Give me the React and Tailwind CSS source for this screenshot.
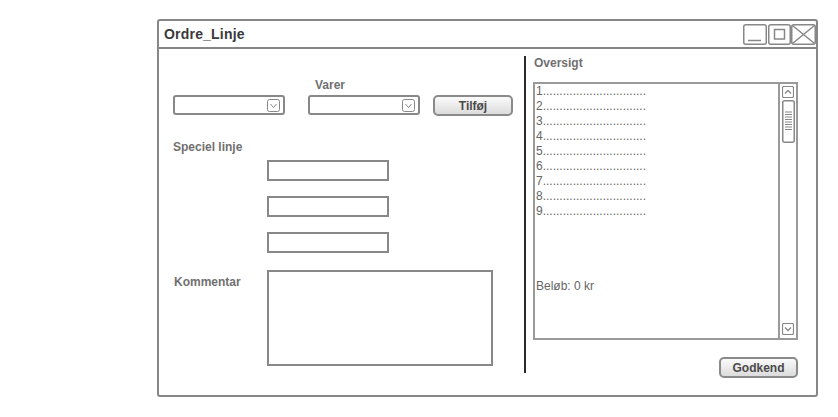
import React from 'react';

const WinButtons = () => (
  <svg width="73" height="21" viewBox="0 0 73 21" fill="none" stroke="#888" strokeWidth="1.5">
    <rect x="0.75" y="0.75" width="22.5" height="19.5" rx="2" />
    <path d="M5 16.5 H18" />
    <rect x="25.75" y="0.75" width="21.5" height="19.5" rx="2" />
    <rect x="31.5" y="5.5" width="10" height="9.5" />
    <rect x="48.75" y="0.75" width="23.5" height="19.5" rx="2" />
    <path d="M49.5 1.5 L71.5 19.5 M71.5 1.5 L49.5 19.5" />
  </svg>
);

const DropBox = () => (
  <svg width="13" height="13" viewBox="0 0 13 13" fill="none" stroke="#888">
    <rect x="0.5" y="0.5" width="12" height="12" rx="2" />
    <path d="M3.5 5 L6.5 8.5 L9.5 5" />
  </svg>
);

const Select = () => (
  <div className="w-[112px] h-[20px] border-2 border-[#888] rounded-[3px] flex items-center justify-end pr-[3px]">
    <DropBox />
  </div>
);

const ArrowBox = ({ up }) => (
  <svg width="12" height="12" viewBox="0 0 12 12" fill="none" stroke="#888">
    <rect x="0.5" y="0.5" width="11" height="11" rx="1.5" strokeWidth="1.2" />
    <path d={up ? 'M3 7.5 L6 4.5 L9 7.5' : 'M3 4.5 L6 7.5 L9 4.5'} strokeWidth="1.3" />
  </svg>
);

const Thumb = () => (
  <svg width="13" height="43" viewBox="0 0 13 43" fill="none" stroke="#888">
    <rect x="0.75" y="0.75" width="11.5" height="41.5" rx="2" strokeWidth="1.5" />
    {[12, 14.5, 17, 19.5, 22, 24.5, 27, 29.5].map((y) => (
      <path key={y} d={`M3 ${y} H10`} />
    ))}
  </svg>
);

const btn =
  'rounded-[5px] border-2 border-[#8a8a8a] bg-gradient-to-b from-[#fafafa] to-[#dcdcdc] text-[12px] font-bold text-[#4a4a4a] flex items-center justify-center';

const label = 'text-[12px] leading-[14px] font-bold text-[#707070]';

export default function App() {
  const items = [1, 2, 3, 4, 5, 6, 7, 8, 9];
  return (
    <div className="w-[838px] h-[417px] bg-white pt-[19px] pl-[157px] font-['Liberation_Sans',Arial,sans-serif]">
      <div className="w-[661px] h-[378px] border-2 border-[#868686] rounded-[3px] flex flex-col">
        {/* title bar */}
        <div className="h-[28px] border-b-2 border-[#868686] flex items-center justify-between pl-[5px]">
          <span className="text-[14px] font-bold text-[#3a3a3a] tracking-[0.2px]">Ordre_Linje</span>
          <WinButtons />
        </div>

        <div className="flex flex-1">
          {/* left */}
          <div className="w-[365px] pl-[14px] pt-[29px] flex flex-col">
            <div className={`pl-[142px] ${label}`}>Varer</div>
            <div className="mt-[3px] flex items-start">
              <Select />
              <div className="ml-[23px]">
                <Select />
              </div>
              <button className={`ml-[13px] w-[80px] h-[21px] ${btn}`}>Tilføj</button>
            </div>

            <div className={`mt-[24px] ${label}`}>Speciel linje</div>
            <div className="mt-[6px] ml-[94px] flex flex-col gap-[15px]">
              <div className="w-[122px] h-[21px] border-2 border-[#888]" />
              <div className="w-[122px] h-[21px] border-2 border-[#888]" />
              <div className="w-[122px] h-[21px] border-2 border-[#888]" />
            </div>

            <div className="mt-[17px] flex">
              <div className={`w-[94px] pt-[5px] pl-[1px] ${label}`}>Kommentar</div>
              <div className="w-[226px] h-[96px] border-2 border-[#888]" />
            </div>
          </div>

          {/* divider */}
          <div className="w-[2px] bg-[#2a2a2a] mt-[7px] mb-[22px]" />

          {/* right */}
          <div className="flex-1 pl-[7px] pt-[7px] flex flex-col">
            <div className={`pl-[1px] ${label}`}>Oversigt</div>
            <div className="mt-[12px] w-[265px] h-[258px] border-2 border-[#9a9a9a] flex">
              <div className="flex-1 pl-[1px] text-[12px] leading-[15px] text-[#666]">
                {items.map((n) => (
                  <div key={n}>{n}...............................</div>
                ))}
                <div className="mt-[60px]">Beløb: 0 kr</div>
              </div>
              <div className="w-[18px] border-l-2 border-[#9a9a9a] flex flex-col items-center pt-[2px] pb-[3px]">
                <ArrowBox up />
                <div className="mt-[2px]">
                  <Thumb />
                </div>
                <div className="mt-auto">
                  <ArrowBox />
                </div>
              </div>
            </div>
            <div className="w-[265px] mt-[17px] flex justify-end">
              <button className={`w-[79px] h-[21px] ${btn}`}>Godkend</button>
            </div>
          </div>
        </div>
      </div>
    </div>
  );
}
